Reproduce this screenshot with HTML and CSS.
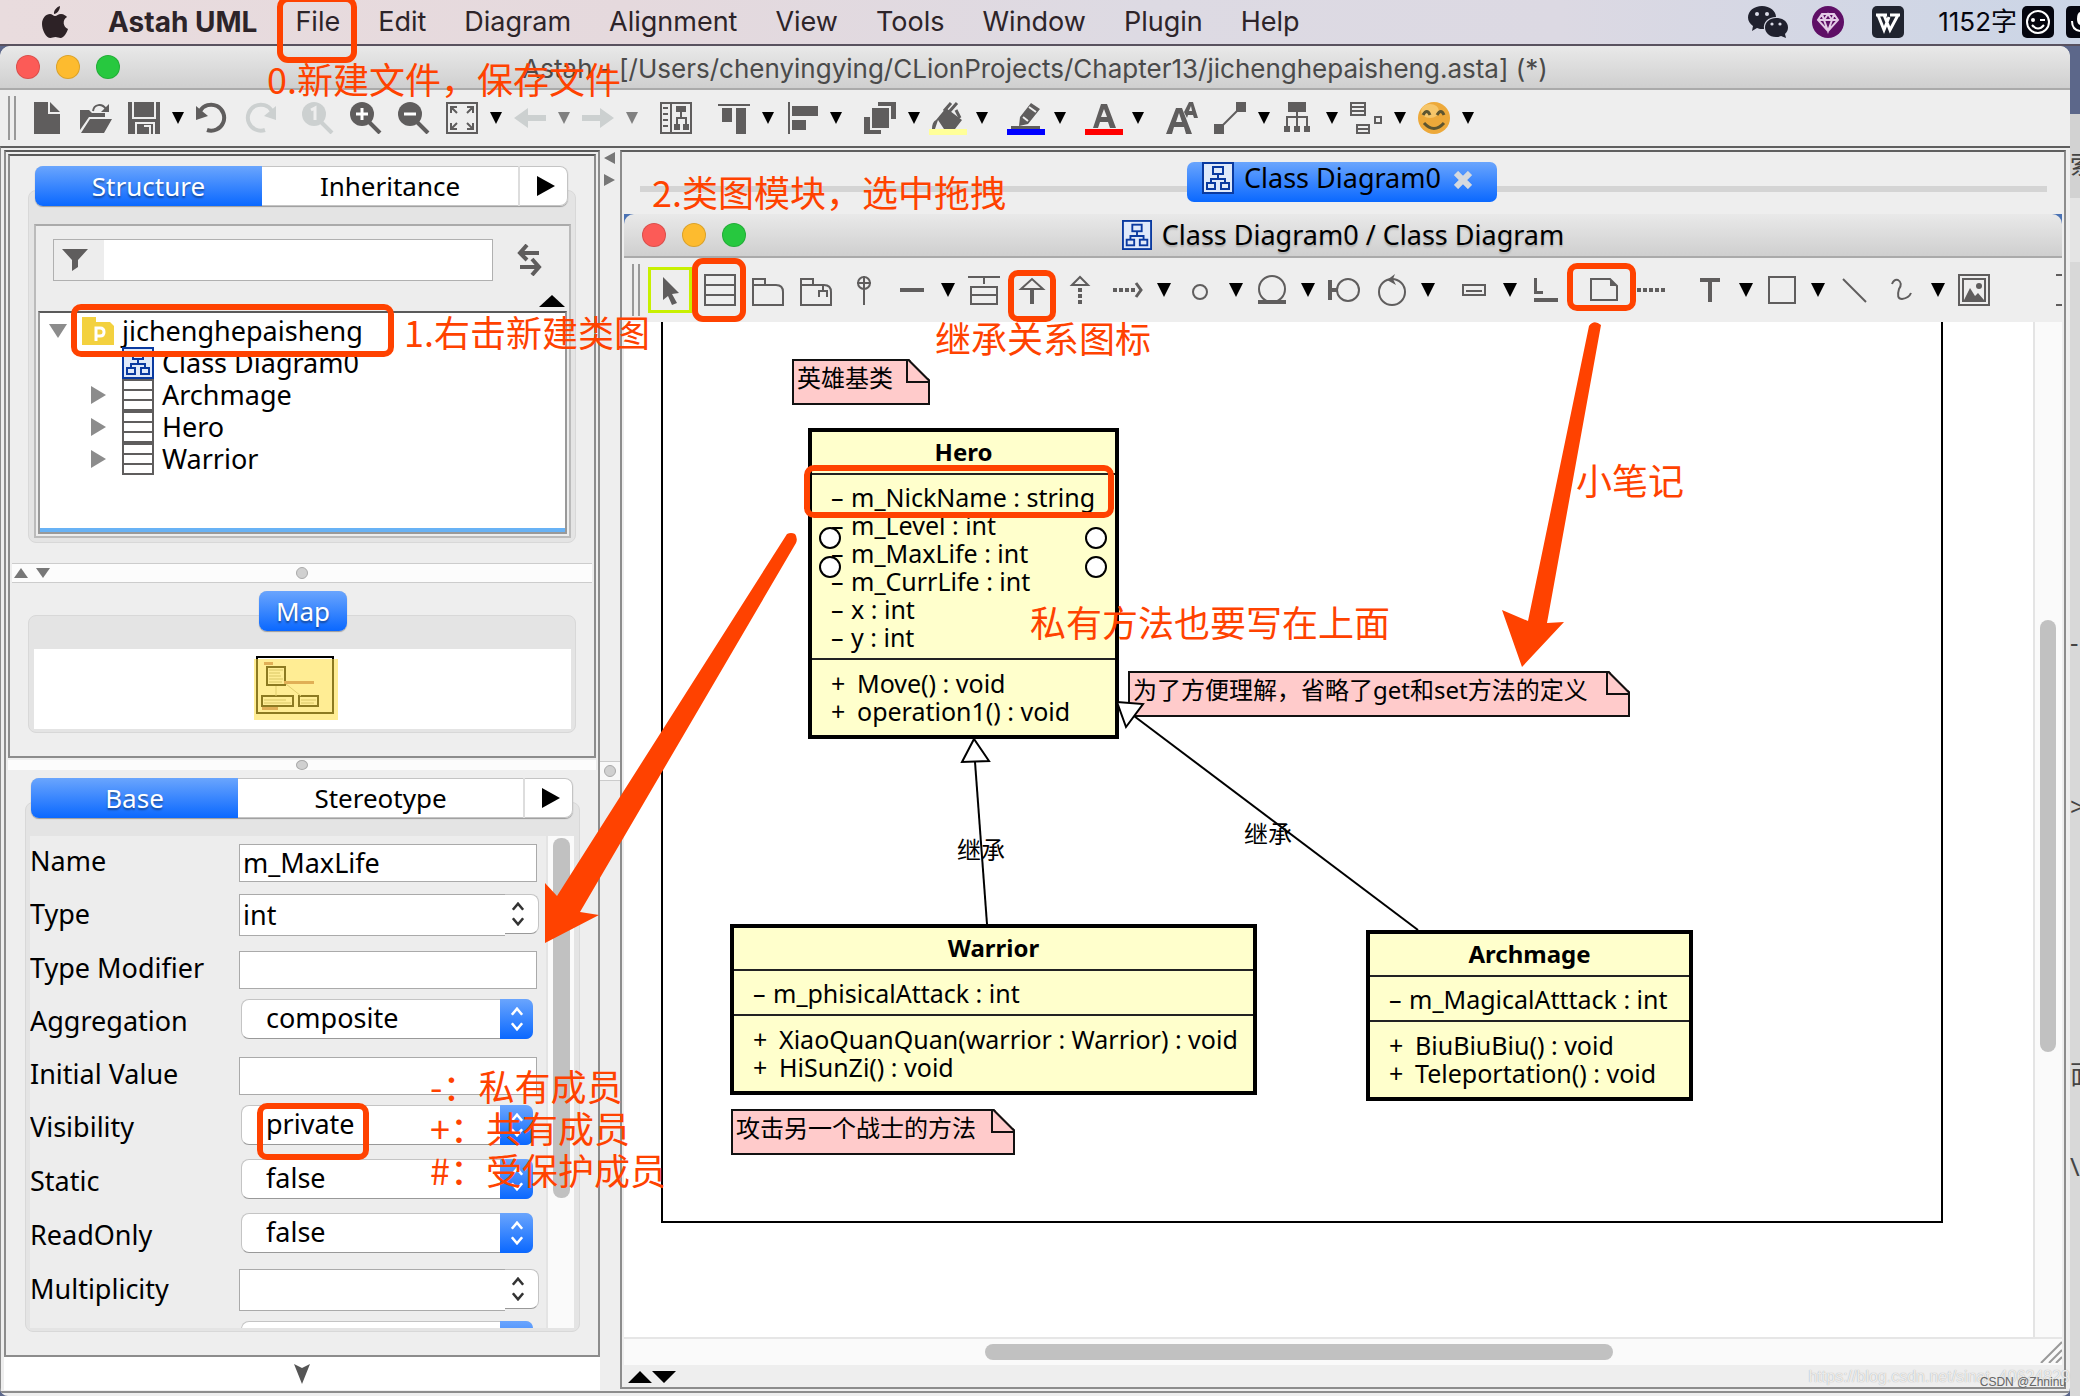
FILE: index.html
```html
<!DOCTYPE html>
<html lang="zh-CN">
<head>
<meta charset="utf-8">
<title>Astah - jichenghepaisheng.asta</title>
<link rel="stylesheet" href="styles.css">
</head>
<body>
<svg class="defs" width="0" height="0" aria-hidden="true">
  <symbol id="drop" viewBox="0 0 12 12"><path d="M0 0H12L6 12Z"/></symbol>
  <symbol id="diagram" viewBox="0 0 32 32">
    <rect x="1" y="1" width="30" height="30" fill="#e0eafa" stroke="#0a3aa0" stroke-width="2"/>
    <g fill="none" stroke="#0a3aa0" stroke-width="2"><rect x="11" y="5" width="10" height="7"/><path d="M16 12v5M9 21v-4h14v4"/><rect x="5" y="21" width="8" height="6"/><rect x="19" y="21" width="8" height="6"/></g>
  </symbol>
  <symbol id="class" viewBox="0 0 32 32"><path d="M1 1H31V31H1ZM1 11H31M1 21H31" fill="#fff" stroke="#5f5d5d" stroke-width="2"/></symbol>
  <symbol id="steps" viewBox="0 0 16 28"><path d="M2 9L8 2L14 9M2 19L8 26L14 19" fill="none" stroke="currentColor" stroke-width="3"/></symbol>
  <symbol id="lens" viewBox="0 0 32 32"><circle cx="12" cy="12" r="12"/><path d="M19 20L30 31" stroke="currentColor" stroke-width="4"/></symbol>
</svg>

<div class="desktop">
  <header class="menubar">
    <nav class="menus">
      <button class="apple" aria-label="Apple menu"><svg viewBox="0 0 26 32" width="26" height="32"><path d="M18 0C18 4 15 8 12 8C11.500 4 15 1 18 0ZM13 10C15 10 16 8 19 8C22 8 24 10 25 11C20 14 21 21 26 23C25 26 22 32 18.500 32C16.500 32 15.500 31 13.500 31C11.500 31 10 32 8.500 32C4 32 0 24 0 18C0 12 4 8 8 8C10 8 11.500 10 13 10Z" fill="#2d2226"/></svg></button>
      <button class="app-name">Astah UML</button>
      <button>File</button>
      <button>Edit</button>
      <button>Diagram</button>
      <button>Alignment</button>
      <button>View</button>
      <button>Tools</button>
      <button>Window</button>
      <button>Plugin</button>
      <button>Help</button>
    </nav>
    <div class="tray">
      <svg class="wechat" viewBox="0 0 40 32" width="40" height="32"><path d="M14 0C22 0 28 5 28 11C20 11 15 16 16 23L14 23C12 23 10 22.500 9 22L4 25L5 20C2 18 0 15 0 11.500C0 5 6 0 14 0Z" fill="#20212e"/><circle cx="9" cy="8" r="2" fill="#dadbe7"/><circle cx="19" cy="8" r="2" fill="#dadbe7"/><path d="M28 12C35 12 40 16 40 21.500C40 24 39 26 37 28L38 32L33 30C32 30.500 30 31 28 31C21 31 17 26 17 21.500C17 16 22 12 28 12Z" fill="#20212e"/><circle cx="24" cy="18" r="1.600" fill="#dadbe7"/><circle cx="32" cy="18" r="1.600" fill="#dadbe7"/></svg>
      <svg viewBox="0 0 32 32" width="32" height="32"><circle cx="16" cy="16" r="16" fill="#5f0f66"/><path d="M10 8H22L26 14L16 25L6 14ZM6 14H26M10 8L12 14L16 25L20 14L22 8M12 14L16 8L20 14" fill="none" stroke="#e3cbe6" stroke-width="2"/></svg>
      <svg class="w-icon" viewBox="0 0 32 32" width="32" height="32"><rect width="32" height="32" rx="5" fill="#20242f"/><path d="M4 9H15M6 9L12 24L17 11M12 9L18 24L26 9M18 9H28" fill="none" stroke="#fff" stroke-width="3"/></svg>
      <span class="count">1152字</span>
      <svg viewBox="0 0 32 32" width="32" height="32"><rect width="32" height="32" rx="5" fill="#05060f"/><circle cx="16" cy="16" r="11" fill="none" stroke="#fff" stroke-width="2"/><circle cx="11" cy="14" r="2" fill="#fff"/><path d="M18 14H23M10 19Q16 26 22 19" fill="none" stroke="#fff" stroke-width="2"/></svg>
      <svg class="cut" viewBox="0 0 14 32" width="14" height="32"><path d="M14 0H5Q0 0 0 5V27Q0 32 5 32H14Z" fill="#05060f"/><path d="M14 25Q6 24 6 15" fill="none" stroke="#fff" stroke-width="2"/><path d="M14 6Q11 7 11 13Q11 18 14 19Z" fill="#fff"/></svg>
    </div>
  </header>

  <div class="screen">
  <main class="window">
    <div class="titlebar">
      <div class="lights"><button class="red" aria-label="Close"></button><button class="amber" aria-label="Minimise"></button><button class="green" aria-label="Zoom"></button></div>
      <h1>Astah - [/Users/chenyingying/CLionProjects/Chapter13/jichenghepaisheng.asta] (*)</h1>
    </div>

    <div class="toolbar">
      <span class="grip"></span>
      <button class="icon" aria-label="New"><svg viewBox="0 0 32 32"><path d="M2 0H16V12H28V32H2ZM18 0L28 10H18Z"/></svg></button>
      <button class="icon" aria-label="Open"><svg viewBox="0 0 32 32"><path d="M0 8H9L12 11H25V15H9L0 28ZM10 17H32L24 31H1Z"/><path d="M13 9C14 2 22 1 26 7" fill="none" stroke="currentColor" stroke-width="2"/><path d="M29 2V10H21Z"/></svg></button>
      <button class="icon" aria-label="Save"><svg viewBox="0 0 32 32"><path d="M0 0H32V32H0Z"/><path d="M5 0V16H27V0M8 32V21H26V32M16 24H22V32" fill="none" stroke="#eee" stroke-width="2"/></svg></button>
      <button class="drop" aria-label="Save options"><svg><use href="#drop"/></svg></button>
      <button class="icon" aria-label="Undo"><svg viewBox="0 0 32 32"><path d="M4 9A13 13 0 1 1 11 28" fill="none" stroke="currentColor" stroke-width="4"/><path d="M0 4V18L12 14Z"/></svg></button>
      <button class="icon off" aria-label="Redo"><svg viewBox="0 0 32 32"><path d="M28 9A13 13 0 1 0 21 28" fill="none" stroke="currentColor" stroke-width="4"/><path d="M32 4V18L20 14Z"/></svg></button>
      <span class="space"></span>
      <button class="icon off" aria-label="Actual size"><svg viewBox="0 0 32 32"><use href="#lens"/><path d="M9 8L13 6V18" fill="none" stroke="#eee" stroke-width="3"/></svg></button>
      <button class="icon" aria-label="Zoom in"><svg viewBox="0 0 32 32"><use href="#lens"/><path d="M6 12H18M12 6V18" stroke="#fff" stroke-width="3"/></svg></button>
      <button class="icon" aria-label="Zoom out"><svg viewBox="0 0 32 32"><use href="#lens"/><path d="M6 12H18" stroke="#fff" stroke-width="3"/></svg></button>
      <button class="icon" aria-label="Fit"><svg viewBox="0 0 32 32"><path d="M1 1H31V31H1ZM5 11V5H11M5 5L11 11M21 5H27V11M27 5L21 11M5 21V27H11M5 27L11 21M21 27H27V21M27 27L21 21" fill="none" stroke="currentColor" stroke-width="2"/></svg></button>
      <button class="drop" aria-label="Fit options"><svg><use href="#drop"/></svg></button>
      <button class="icon off" aria-label="Back"><svg viewBox="0 0 32 32"><path d="M0 16L14 6V13H32V19H14V26Z"/></svg></button>
      <button class="drop dim" aria-label="Back options"><svg><use href="#drop"/></svg></button>
      <button class="icon off" aria-label="Forward"><svg viewBox="0 0 32 32"><path d="M32 16L18 6V13H0V19H18V26Z"/></svg></button>
      <button class="drop dim" aria-label="Forward options"><svg><use href="#drop"/></svg></button>
      <span class="space"></span>
      <button class="icon" aria-label="Map view"><svg viewBox="0 0 32 32"><path d="M1 1H31V31H1ZM11 1V31M3 6H8M3 12H8M3 18H8M3 24H8M21 9V16M17 24V16H26V24" fill="none" stroke="currentColor" stroke-width="2"/><path d="M16 4H26V10H16ZM14 22H20V28H14ZM23 22H29V28H23Z"/></svg></button>
      <span class="space"></span>
      <button class="icon" aria-label="Align top"><svg viewBox="0 0 32 32"><path d="M0 2H32V4H0ZM4 6H14V20H4ZM18 6H28V32H18Z"/></svg></button>
      <button class="drop" aria-label="Vertical alignment"><svg><use href="#drop"/></svg></button>
      <button class="icon" aria-label="Align left"><svg viewBox="0 0 32 32"><path d="M2 0H4V32H2ZM6 4H32V14H6ZM6 18H20V28H6Z"/></svg></button>
      <button class="drop" aria-label="Horizontal alignment"><svg><use href="#drop"/></svg></button>
      <span class="space"></span>
      <button class="icon" aria-label="Depth"><svg viewBox="0 0 32 32"><path d="M14 0H32V17H27V4H14ZM8 6H25V26H8ZM0 15H6V28H17V32H0Z"/></svg></button>
      <button class="drop" aria-label="Depth options"><svg><use href="#drop"/></svg></button>
      <button class="icon" aria-label="Fill colour"><svg viewBox="0 0 32 32"><path d="M4 18L14 6L30 18L23 27H12L6 18Q4 24 3 27H0Q0 20 4 18Z"/><path d="M12 9L19 1M17 10L25 1M24 8L28 16" fill="none" stroke="currentColor" stroke-width="3"/></svg><i class="swatch yellow"></i></button>
      <button class="drop" aria-label="Fill options"><svg><use href="#drop"/></svg></button>
      <span class="space"></span>
      <button class="icon" aria-label="Line colour"><svg viewBox="0 0 32 32"><path d="M21 1L30 7L18 22L9 24L10 15ZM1 24H30V27H1Z"/><path d="M13 15L18 19M19 5L26 10" stroke="#eee" stroke-width="2"/></svg><i class="swatch blue"></i></button>
      <button class="drop" aria-label="Line options"><svg><use href="#drop"/></svg></button>
      <span class="space"></span>
      <button class="icon" aria-label="Font colour"><svg viewBox="0 0 32 32"><path d="M5 26L13 2H19L28 26H22L20 20H12L10 26ZM13 15H19L16 7Z"/></svg><i class="swatch crimson"></i></button>
      <button class="drop" aria-label="Font colour options"><svg><use href="#drop"/></svg></button>
      <span class="space"></span>
      <button class="icon" aria-label="Font size"><svg viewBox="0 0 32 32"><path fill-rule="evenodd" d="M0 32L10 6H16L26 32H20L18 25H8L6 32ZM10 20H16L13 11ZM18 10L23 0H27L32 16H28L27 13H22L21 16ZM23 9H26L25 4Z"/></svg></button>
      <button class="icon" aria-label="Line style"><svg viewBox="0 0 32 32"><path d="M22 0H32V10H22ZM0 22H10V32H0Z"/><path d="M8 24L24 8" stroke="currentColor" stroke-width="2"/></svg></button>
      <button class="drop" aria-label="Line style options"><svg><use href="#drop"/></svg></button>
      <button class="icon" aria-label="Tree layout"><svg viewBox="0 0 32 32"><path d="M6 0H24V10H6ZM2 24H8V30H2ZM12 24H18V30H12ZM22 24H28V30H22Z"/><path d="M15 10V24M5 24V15H25V24" fill="none" stroke="currentColor" stroke-width="2"/></svg></button>
      <button class="drop" aria-label="Tree layout options"><svg><use href="#drop"/></svg></button>
      <button class="icon" aria-label="Auto layout"><svg viewBox="0 0 32 32"><path d="M1 1H15V13H1ZM1 5H15M1 9H15M7 23H19V31H7ZM7 27H19M25 15H31V21H25Z" fill="none" stroke="currentColor" stroke-width="2"/></svg></button>
      <button class="drop" aria-label="Auto layout options"><svg><use href="#drop"/></svg></button>
      <button class="icon" aria-label="Emoji"><svg viewBox="0 0 32 32"><circle cx="16" cy="16" r="16" fill="#eda93a"/><ellipse cx="12" cy="9" rx="9" ry="7" fill="#f6c66a"/><path d="M5 13Q9 6 12 13M19 13Q23 6 26 13M6 21Q16 32 26 21" fill="none" stroke="#5d5530" stroke-width="3"/></svg></button>
      <button class="drop" aria-label="Emoji options"><svg><use href="#drop"/></svg></button>
    </div>

    <div class="workspace">
      <aside class="side">
        <div class="pane">
          <section class="explorer">
            <div class="tabs"><button class="on grow-a">Structure</button><button class="grow-b">Inheritance</button><button class="more" aria-label="More tabs"><svg viewBox="0 0 18 20" width="18" height="20"><path d="M0 0L18 10L0 20Z"/></svg></button></div>
            <div class="group">
              <div class="tree-box">
                <div class="filter">
                  <label class="filter-field"><svg viewBox="0 0 26 22" width="26" height="22"><path d="M0 0H26L16 11V18L10 22V11Z"/></svg><input type="text" aria-label="Filter"></label>
                  <button class="swap" aria-label="Swap"><svg viewBox="0 0 26 32" width="26" height="32"><path d="M10 1L3 9L10 16M2 9H22M15 15L22 23L15 31M3 23H23" fill="none" stroke="#5f5d5d" stroke-width="4"/></svg></button>
                </div>
                <button class="collapse" aria-label="Collapse"><svg viewBox="0 0 26 12" width="26" height="12"><path d="M0 12L13 0L26 12Z"/></svg></button>
                <ul class="tree">
                  <li class="root"><svg class="tw" viewBox="0 0 18 14" width="18" height="14"><path d="M0 0H18L9 14Z"/></svg><svg viewBox="0 0 32 28" width="32" height="28"><path d="M0 0H14V5H28L32 9V28H0Z" fill="#f3d13f"/><path d="M14 24V11H18Q22 11 22 15Q22 19 18 19H14" fill="none" stroke="#fff" stroke-width="3"/></svg><span>jichenghepaisheng</span></li>
                  <li><i class="tw"></i><svg width="32" height="32"><use href="#diagram"/></svg><span>Class Diagram0</span></li>
                  <li><svg class="tw" viewBox="0 0 15 18" width="15" height="18"><path d="M0 0L15 9L0 18Z"/></svg><svg width="32" height="32"><use href="#class"/></svg><span>Archmage</span></li>
                  <li><svg class="tw" viewBox="0 0 15 18" width="15" height="18"><path d="M0 0L15 9L0 18Z"/></svg><svg width="32" height="32"><use href="#class"/></svg><span>Hero</span></li>
                  <li><svg class="tw" viewBox="0 0 15 18" width="15" height="18"><path d="M0 0L15 9L0 18Z"/></svg><svg width="32" height="32"><use href="#class"/></svg><span>Warrior</span></li>
                </ul>
              </div>
            </div>
            <div class="split"><span class="ends"><svg viewBox="0 0 14 10" width="14" height="10"><path d="M0 10L7 0L14 10Z"/></svg><svg viewBox="0 0 14 10" width="14" height="10"><path d="M0 0H14L7 10Z"/></svg></span><i class="knob"></i></div>
            <div class="tabs single"><button class="on">Map</button></div>
            <div class="group map-group">
              <div class="map"><svg viewBox="0 0 84 64" width="84" height="64"><path d="M3 1H79V57H3Z" fill="#fff" stroke="#000" stroke-width="2"/><g fill="none" stroke="#000" stroke-width="2"><path d="M13 11H31V29H13Z"/><path d="M8 40H39V50H8ZM45 40H64V50H45Z" /></g><path d="M10 6H19V9H10ZM30 25H60V28H30ZM8 51H24V54H8Z" fill="#b77"/><path d="M15 14H29M15 17H26M15 20H27M15 23H29M15 26H28M10 44H32M10 47H37M47 44H62M47 47H60" stroke="#aa9" stroke-width="1"/><path d="M22 30V40M32 28L47 40" stroke="#bba"/><rect x="0" y="3" width="84" height="61" fill="#ffdf3c" fill-opacity=".55"/></svg></div>
            </div>
          </section>
          <div class="split slim"><i class="knob"></i></div>
          <section class="properties">
            <div class="tabs"><button class="on grow-c">Base</button><button class="grow-d">Stereotype</button><button class="more" aria-label="More tabs"><svg viewBox="0 0 18 20" width="18" height="20"><path d="M0 0L18 10L0 20Z"/></svg></button></div>
            <div class="group props-group">
              <form class="form">
                <div class="row"><label for="name">Name</label><input id="name" class="field" type="text" value="m_MaxLife"></div>
                <div class="row tall"><label for="type">Type</label><div class="combo"><input id="type" type="text" value="int"><button type="button" aria-label="Choose type"><svg><use href="#steps"/></svg></button></div></div>
                <div class="row"><label for="mod">Type Modifier</label><input id="mod" class="field" type="text"></div>
                <div class="row"><label for="agg">Aggregation</label><div class="pick"><select id="agg"><option>composite</option></select><span><svg><use href="#steps"/></svg></span></div></div>
                <div class="row"><label for="init">Initial Value</label><input id="init" class="field" type="text"></div>
                <div class="row tall"><label for="vis">Visibility</label><div class="pick"><select id="vis"><option>private</option></select><span><svg><use href="#steps"/></svg></span></div></div>
                <div class="row tall"><label for="stat">Static</label><div class="pick"><select id="stat"><option>false</option></select><span><svg><use href="#steps"/></svg></span></div></div>
                <div class="row tall"><label for="ro">ReadOnly</label><div class="pick"><select id="ro"><option>false</option></select><span><svg><use href="#steps"/></svg></span></div></div>
                <div class="row tall"><label for="mult">Multiplicity</label><div class="combo"><input id="mult" type="text"><button type="button" aria-label="Choose multiplicity"><svg><use href="#steps"/></svg></button></div></div>
                <div class="row tall"><span></span><div class="pick"><select aria-label="Derived"><option>false</option></select><span><svg><use href="#steps"/></svg></span></div></div>
              </form>
              <div class="vbar"><i></i></div>
            </div>
          </section>
        </div>
        <button class="expand" aria-label="Expand"><svg viewBox="0 0 16 20" width="16" height="20"><path d="M0 0L8 4L16 0L8 20Z" fill="#555"/></svg></button>
      </aside>

      <div class="divider">
        <svg viewBox="0 0 12 36" width="12" height="36"><path d="M11 0V12L0 6ZM0 22V34L11 28Z" fill="#777"/></svg>
        <span><i class="knob"></i></span>
      </div>

      <section class="editor">
        <div class="tabstrip"><button class="doc-tab"><svg width="32" height="32"><use href="#diagram"/></svg><span>Class Diagram0</span><svg class="x" viewBox="0 0 18 18" width="18" height="18"><path d="M2 2L16 16M16 2L2 16" stroke="#d5d9de" stroke-width="6"/></svg></button></div>
        <div class="frame">
          <div class="titlebar inner">
            <div class="lights"><button class="red" aria-label="Close"></button><button class="amber" aria-label="Minimise"></button><button class="green" aria-label="Zoom"></button></div>
            <h2><svg width="30" height="30"><use href="#diagram"/></svg>Class Diagram0 / Class Diagram</h2>
          </div>
          <div class="palette">
            <span class="grip"></span>
            <button class="icon picked" aria-label="Select"><svg viewBox="0 0 32 32"><path d="M9 3L25 19L18 20L23 29L18 31L14 22L9 26Z"/></svg></button>
            <button class="icon" aria-label="Class"><svg viewBox="0 0 32 32"><path d="M1 1H31V31H1ZM1 11H31M1 21H31" fill="none" stroke="currentColor" stroke-width="2"/></svg></button>
            <button class="icon" aria-label="Package"><svg viewBox="0 0 32 32"><path d="M1 31V5H13V11H24Q31 11 31 18V31ZM1 11H13" fill="none" stroke="currentColor" stroke-width="2"/></svg></button>
            <button class="icon" aria-label="Subsystem"><svg viewBox="0 0 32 32"><path d="M1 31V5H13V11H24Q31 11 31 18V31ZM1 11H13M19 23V17H27V23M23 17V12" fill="none" stroke="currentColor" stroke-width="2"/></svg></button>
            <button class="icon" aria-label="Containment"><svg viewBox="0 0 32 32"><path d="M16 2V31M9 9H23" stroke="currentColor" stroke-width="2"/><circle cx="16" cy="9" r="6" fill="none" stroke="currentColor" stroke-width="2"/></svg></button>
            <button class="icon" aria-label="Association"><svg viewBox="0 0 32 32"><path d="M4 14H28V18H4Z"/></svg></button>
            <button class="drop" aria-label="Association options"><svg><use href="#drop"/></svg></button>
            <button class="icon" aria-label="Association class"><svg viewBox="0 0 32 32"><path d="M0 3H32M16 3V10M3 13H29V30H3ZM3 21H29" fill="none" stroke="currentColor" stroke-width="2"/></svg></button>
            <button class="icon" aria-label="Generalization"><svg viewBox="0 0 32 32"><path d="M5 15L16 5L27 15Z" fill="none" stroke="currentColor" stroke-width="2"/><path d="M14 15H18V30H14Z"/></svg></button>
            <button class="icon" aria-label="Realization"><svg viewBox="0 0 32 32"><path d="M8 11L16 3L24 11Z" fill="none" stroke="currentColor" stroke-width="2"/><path d="M16 14V31" stroke="currentColor" stroke-width="4" stroke-dasharray="4 2"/></svg></button>
            <button class="icon" aria-label="Dependency"><svg viewBox="0 0 32 32"><path d="M1 16H25" stroke="currentColor" stroke-width="4" stroke-dasharray="4 2"/><path d="M24 9L29 16L24 23" fill="none" stroke="currentColor" stroke-width="3"/></svg></button>
            <button class="drop" aria-label="Dependency options"><svg><use href="#drop"/></svg></button>
            <button class="icon" aria-label="Interface"><svg viewBox="0 0 32 32"><circle cx="16" cy="18" r="7" fill="none" stroke="currentColor" stroke-width="2"/></svg></button>
            <button class="drop" aria-label="Interface options"><svg><use href="#drop"/></svg></button>
            <button class="icon" aria-label="Entity"><svg viewBox="0 0 32 32"><circle cx="16" cy="15" r="13" fill="none" stroke="currentColor" stroke-width="2"/><path d="M2 28H30" stroke="currentColor" stroke-width="4"/></svg></button>
            <button class="drop" aria-label="Entity options"><svg><use href="#drop"/></svg></button>
            <button class="icon" aria-label="Boundary"><svg viewBox="0 0 32 32"><circle cx="20" cy="16" r="11" fill="none" stroke="currentColor" stroke-width="2"/><path d="M0 6H4V14H9V18H4V26H0Z"/></svg></button>
            <button class="icon" aria-label="Control"><svg viewBox="0 0 32 32"><circle cx="16" cy="18" r="13" fill="none" stroke="currentColor" stroke-width="2"/><path d="M11 6L19 0L17 5L20 11Z"/></svg></button>
            <button class="drop" aria-label="Control options"><svg><use href="#drop"/></svg></button>
            <span class="space"></span>
            <button class="icon" aria-label="Instance"><svg viewBox="0 0 32 32"><path d="M5 11H27V21H5ZM8 17H24" fill="none" stroke="currentColor" stroke-width="2"/></svg></button>
            <button class="drop" aria-label="Instance options"><svg><use href="#drop"/></svg></button>
            <button class="icon" aria-label="Link"><svg viewBox="0 0 32 32"><path d="M4 4H7V17H13V20H4ZM4 24H28V28H4Z"/></svg></button>
            <span class="space"></span>
            <button class="icon" aria-label="Note"><svg viewBox="0 0 32 32"><path d="M3 5H22L29 12V26H3Z" fill="none" stroke="currentColor" stroke-width="2"/><path d="M22 5V12H29Z"/></svg></button>
            <button class="icon" aria-label="Note anchor"><svg viewBox="0 0 32 32"><path d="M1 16H31" stroke="currentColor" stroke-width="4" stroke-dasharray="4 2"/></svg></button>
            <span class="space"></span>
            <button class="icon" aria-label="Text"><svg viewBox="0 0 32 32"><path d="M6 4H26V8H18V28H14V8H6Z"/></svg></button>
            <button class="drop" aria-label="Text options"><svg><use href="#drop"/></svg></button>
            <button class="icon" aria-label="Rectangle"><svg viewBox="0 0 32 32"><rect x="3" y="3" width="26" height="26" fill="none" stroke="currentColor" stroke-width="2"/></svg></button>
            <button class="drop" aria-label="Shape options"><svg><use href="#drop"/></svg></button>
            <button class="icon" aria-label="Line"><svg viewBox="0 0 32 32"><path d="M5 5L28 28" stroke="currentColor" stroke-width="2"/></svg></button>
            <button class="icon" aria-label="Freehand"><svg viewBox="0 0 32 32"><path d="M6 10Q8 5 12 6Q17 9 13 15Q10 25 16 25Q23 24 25 19" fill="none" stroke="currentColor" stroke-width="2"/></svg></button>
            <button class="drop" aria-label="Freehand options"><svg><use href="#drop"/></svg></button>
            <button class="icon" aria-label="Image"><svg viewBox="0 0 32 32"><path d="M1 1H31V31H1ZM5 5H27V27H5Z" fill="none" stroke="currentColor" stroke-width="2"/><circle cx="21" cy="12" r="3"/><path d="M6 26L12 14L17 22L20 19L26 26Z"/></svg></button>
            <i class="edge"></i>
          </div>
          <div class="view">
            <div class="canvas">
              <div class="sheet"></div>
              <div class="note n1">英雄基类</div>
              <div class="note n2">为了方便理解，省略了get和set方法的定义</div>
              <div class="note n3">攻击另一个战士的方法</div>
              <article class="uml hero">
                <h3>Hero</h3>
                <ul><li><b>–</b>m_NickName : string</li><li><b>–</b>m_Level : int</li><li><b>–</b>m_MaxLife : int</li><li><b>–</b>m_CurrLife : int</li><li><b>–</b>x : int</li><li><b>–</b>y : int</li></ul>
                <ul class="ops"><li><b>+</b>Move() : void</li><li><b>+</b>operation1() : void</li></ul>
              </article>
              <article class="uml warrior">
                <h3>Warrior</h3>
                <ul><li><b>–</b>m_phisicalAttack : int</li></ul>
                <ul class="ops"><li><b>+</b>XiaoQuanQuan(warrior : Warrior) : void</li><li><b>+</b>HiSunZi() : void</li></ul>
              </article>
              <article class="uml archmage">
                <h3>Archmage</h3>
                <ul><li><b>–</b>m_MagicalAtttack : int</li></ul>
                <ul class="ops"><li><b>+</b>BiuBiuBiu() : void</li><li><b>+</b>Teleportation() : void</li></ul>
              </article>
              <svg class="links" width="1400" height="1000"><g fill="#fff" stroke="#000" stroke-width="2"><path d="M351 440L363 602" /><path d="M350 417L338 440L365 439Z"/><path d="M510 394L794 608"/><path d="M493 380L519 382L502 405Z"/><circle cx="206" cy="216" r="10"/><circle cx="206" cy="245" r="10"/><circle cx="472" cy="216" r="10"/><circle cx="472" cy="245" r="10"/></g></svg>
              <span class="rel r1">继承</span>
              <span class="rel r2">继承</span>
            </div>
            <div class="vbar big"><i></i></div>
            <div class="hbar"><i></i><svg viewBox="0 0 22 22" width="22" height="22"><path d="M1 22L22 1M9 22L22 9M16 22L22 16" stroke="#999" stroke-width="2"/></svg></div>
          </div>
        </div>
        <div class="status"><svg viewBox="0 0 48 12" width="48" height="12"><path d="M0 12L12 0L24 12ZM24 0H48L36 12Z"/></svg></div>
      </section>
    </div>
  </main>
  <aside class="behind"><span class="b1">索</span><span class="b2">-</span><span class="b3">&gt;</span><span class="b4">面</span><span class="b5">\</span></aside>
  </div>

  <div class="marks">
    <svg width="2080" height="1396" aria-hidden="true">
      <g fill="none" stroke="#ff4200" stroke-width="6"><rect x="280" y="-1" width="74" height="61" rx="8"/><rect x="74" y="307" width="317" height="47" rx="7"/><rect x="695" y="261" width="48" height="58" rx="8"/><rect x="1011" y="273" width="42" height="46" rx="7"/><rect x="1570" y="266" width="63" height="42" rx="7"/><rect x="807" y="468" width="304" height="47" rx="7"/><rect x="260" y="1106" width="106" height="51" rx="7"/></g>
      <path d="M787 534Q791 532 795 534Q798 538 796 543L580 912L599 915L545 943V883L557 896Z" fill="#ff4200"/>
      <path d="M1589 326Q1594 319 1601 325L1547 623L1564 622L1522 667L1502 610L1528 621Z" fill="#ff4200"/>
    </svg>
    <p class="m0">0.新建文件，保存文件</p>
    <p class="m1">1.右击新建类图</p>
    <p class="m2">2.类图模块，选中拖拽</p>
    <p class="m3">继承关系图标</p>
    <p class="m4">小笔记</p>
    <p class="m5">私有方法也要写在上面</p>
    <p class="m6">-：私有成员<br>+：共有成员<br>#：受保护成员</p>
    <small class="url">https://blog.csdn.net/sinat_40624829</small>
    <small class="credit">CSDN @Zhninu</small>
  </div>
</div>
</body>
</html>
```
FILE: styles.css
```css
* { box-sizing: border-box; }
html, body { margin: 0; height: 100%; }
body {
  font-family: "Noto Sans", "Noto Sans CJK SC", sans-serif;
  font-size: 27px;
  line-height: 32px;
  color: #000;
  overflow: hidden;
}
button, input, select { font: inherit; color: inherit; border: 0; padding: 0; margin: 0; background: none; border-radius: 0; outline: 0; }
ul, h1, h2, h3, p { margin: 0; padding: 0; list-style: none; font-weight: 400; font-size: inherit; }
svg { display: block; flex: none; }
.defs { position: absolute; }

.desktop { position: relative; height: 100vh; display: flex; flex-direction: column; background: #2a2127; overflow: hidden; }

/* system menu bar */
.menubar {
  height: 46px; flex: none;
  display: flex; justify-content: space-between; align-items: center;
  padding-left: 42px;
  border-bottom: 2px solid #59525f;
  background: linear-gradient(90deg, #e9dcde 0%, #e5d9dd 30%, #dddae3 55%, #dcd9e3 75%, #cbd5e6 100%);
  font-family: Inter, "Noto Sans CJK SC", sans-serif;
  color: #2d2429;
}
.menus { display: flex; align-items: center; gap: 38px; }
.menus .apple { height: 36px; margin-right: 2px; }
.menus .app-name { font-weight: 700; font-size: 28px; }
.tray { display: flex; align-items: center; gap: 28px; color: #05060f; font-size: 26px; }
.tray .wechat { margin-right: -4px; }
.tray .count { margin-left: 6px; margin-right: -23px; }
.tray .cut { margin-left: -16px; }

.screen { flex: 1; min-height: 0; display: flex; background: #5c678a; }
.window { flex: 1; min-width: 0; display: flex; flex-direction: column; background: #eee; border-radius: 10px 10px 8px 8px; overflow: hidden; }

.titlebar {
  height: 44px; flex: none; display: grid; grid-template-columns: 1fr auto 1fr; align-items: center;
  padding-left: 16px;
  background: linear-gradient(#e9e9e9, #cfcfcf);
  border-bottom: 2px solid #aaa; border-radius: 10px 10px 0 0;
}
.titlebar h1 { font-family: Inter, sans-serif; font-size: 26px; color: #4a4a4a; padding: 4px 16px 0 0; }
.lights { display: flex; gap: 16px; }
.lights button { width: 24px; height: 24px; border-radius: 50%; border: 1px solid #0002; }
.red { background: #fc5b57; }
.amber { background: #fdbb2f; }
.green { background: #27c83f; }

/* both tool bars */
.toolbar, .palette { display: flex; align-items: center; flex: none; color: #5f5d5d; }
.toolbar { height: 56px; padding-left: 8px; }
.grip { width: 8px; height: 44px; border: solid #999; border-width: 0 2px; margin-right: 8px; }
.icon { position: relative; width: 48px; height: 48px; display: grid; place-items: center; flex: none; }
.icon svg { width: 32px; height: 32px; fill: currentColor; }
.icon.off { color: #ccd0d0; }
.drop { width: 20px; height: 32px; display: grid; place-items: center; flex: none; color: #000; }
.drop svg { width: 12px; height: 12px; fill: currentColor; }
.drop.dim { color: #808080; }
.space { width: 10px; flex: none; }
.swatch { position: absolute; left: 5px; right: 5px; bottom: 7px; height: 6px; }
.yellow { background: #ffff99; }
.blue { background: #00f; }
.crimson { background: #f00; }

.workspace { flex: 1; min-height: 0; display: flex; margin-bottom: 3px; padding: 2px 4px 0 3px; border: solid #8c8c8c; border-width: 2px 0 2px 1px; border-top-color: #5f5f5f; }
.side { width: 596px; flex: none; display: flex; flex-direction: column; }
.pane { flex: 1; min-height: 0; display: flex; flex-direction: column; border: 2px solid #8c8c8c; border-top-color: #5a5a5a; padding: 2px 2px 0; }
.explorer { border: 2px solid #8c8c8c; border-top-color: #5a5a5a; padding-top: 10px; height: 604px; flex: none; }

.tabs { position: relative; display: flex; height: 40px; margin: 0 26px 0 25px; border-radius: 8px; background: #fff; box-shadow: inset 0 0 0 1px #c4c4c4, 0 1px 1px #999; overflow: hidden; z-index: 1; font-size: 26px; }
.tabs button { display: grid; place-items: center; }
.tabs .on { background: linear-gradient(#6aa5fd, #0a68ff); color: #fff; text-shadow: 0 2px 2px #0006; }
.tabs .grow-a { flex: 227; }
.tabs .grow-b { flex: 256; }
.tabs .grow-c { flex: 207; }
.tabs .grow-d { flex: 285; }
.tabs .more { width: 50px; border-left: 2px solid #ddd; padding-left: 4px; }
.tabs.single { width: 88px; margin: 8px auto 0 249px; }
.tabs.single .on { flex: 1; }
.group { margin: -16px 18px 0; border: 1px solid #d8d8d8; border-radius: 8px; background: #e4e4e4; padding: 33px 4px 4px 5px; }

.tree-box { border: 2px solid #bbb; border-top-color: #aaa; background: #ededed; padding: 13px 2px 2px; }
.filter { display: flex; align-items: center; height: 42px; padding-left: 15px; }
.filter-field { width: 440px; height: 42px; display: flex; align-items: center; border: 1px solid #b0b0b0; }
.filter-field svg { margin: 0 16px 0 8px; fill: #5f5d5d; }
.filter-field input { flex: 1; min-width: 0; height: 40px; background: #fff; }
.swap { margin-left: 24px; }
.collapse { display: block; margin: 14px 2px 4px auto; }
.tree { height: 223px; background: #fff; border: 2px solid #999; border-top-color: #5a5a5a; padding: 2px 0 0; box-shadow: inset 0 -4px #68b2f5; }
.tree li { display: flex; align-items: center; height: 32px; padding-left: 51px; }
.tree li .tw { width: 15px; margin-right: 16px; fill: #8c8c8c; }
.tree li span { padding-left: 8px; }
.tree li.root { padding-left: 9px; }
.tree li.root .tw { width: 18px; margin-right: 15px; }

.split { position: relative; height: 20px; margin: 20px 2px 0; background: #fcfcfc; border: solid #ccc; border-width: 1px 0; display: grid; place-items: center; }
.split .ends { position: absolute; left: 2px; top: 4px; display: flex; gap: 8px; fill: #777; }
.split.slim { height: 10px; margin: 2px 0 0; border: 0; flex: none; }
.knob { display: block; width: 12px; height: 12px; border-radius: 50%; background: #d0d0d0; border: 1px solid #aaa; }
.split.slim .knob { height: 10px; }
.map { height: 80px; background: #fff; padding: 7px 0 0 220px; }
.map-group { padding-bottom: 3px; }

.properties { flex: 1; min-height: 0; display: flex; flex-direction: column; padding: 8px 0 23px; }
.properties .tabs { margin: 0 23px; flex: none; }
.props-group { flex: 1; min-height: 0; display: flex; margin: -16px 16px 0 17px; padding: 33px 5px 3px 4px; }
.form { flex: 1; min-width: 0; overflow: hidden; background: #ededed; }
.row { display: grid; grid-template-columns: 209px 298px; align-items: center; height: 53px; }
.row.tall { height: 54px; }
.row label { padding-bottom: 4px; }
.field { height: 38px; background: #fff; border: 1px solid #aaa; padding: 0 3px; width: 298px; }
.combo { display: flex; width: 300px; height: 42px; margin-bottom: 2px; }
.combo input { width: 266px; background: #fff; border: 1px solid #aaa; border-right: 0; padding: 0 3px; }
.combo button { width: 34px; height: 40px; padding-right: 8px; display: grid; place-items: center; background: #fff; border: 1px solid #c4c4c4; border-left: 0; border-bottom-color: #999; border-radius: 0 8px 8px 0; color: #333; }
.combo svg, .pick svg { width: 14px; height: 24px; }
.pick { position: relative; width: 292px; height: 40px; margin: 0 0 8px 2px; }
.pick select { appearance: none; width: 100%; height: 40px; padding: 0 0 2px 24px; background: #fff; border: 1px solid #c4c4c4; border-bottom-color: #999; border-radius: 8px; }
.pick span { position: absolute; right: 0; top: 0; width: 33px; height: 40px; display: grid; place-items: center; border-radius: 0 7px 7px 0; background: linear-gradient(#6aa5fd, #0a68ff); color: #fff; pointer-events: none; }
.vbar { width: 28px; background: #fafafa; border-left: 2px solid #e4e4e4; padding: 2px 4px; }
.vbar i { display: block; height: 360px; width: 17px; margin-left: 1px; border-radius: 8px; background: #c1c1c1; }
.expand { height: 33px; margin-bottom: 1px; background: #fff; display: grid; place-items: center; flex: none; }

.divider { width: 20px; flex: none; display: flex; flex-direction: column; align-items: center; padding-top: 2px; }
.divider span { margin-top: 573px; width: 20px; height: 20px; background: #f8f8f8; border: solid #ccc; border-width: 1px 0; display: grid; place-items: center; }

/* diagram editor */
.editor { flex: 1; min-width: 0; margin-bottom: 2px; display: flex; flex-direction: column; border: 2px solid #8c8c8c; border-top-color: #5f5f5f; }
.tabstrip { height: 62px; flex: none; padding: 10px 17px 12px 18px; display: flex; justify-content: center; background: linear-gradient(#d4d4d4, #d4d4d4) 18px 34px / calc(100% - 35px) 6px no-repeat; }
.doc-tab { width: 310px; height: 40px; display: flex; align-items: flex-start; padding-left: 15px; border-radius: 7px; background: linear-gradient(#6aa5fd, #0a68ff); white-space: nowrap; margin-right: 3px; }
.doc-tab span { margin: 0 10px; width: 200px; text-align: left; }
.doc-tab .x { margin-top: 9px; }
.frame { flex: 1; min-height: 0; margin: 0 2px; display: flex; flex-direction: column; background: #4a72b4; }
.titlebar.inner { padding-left: 18px; }
.inner h2 { display: flex; align-items: center; gap: 10px; padding-right: 18px; text-shadow: 0 2px 2px #0003; }
.palette { height: 64px; padding-left: 8px; background: #eee; }
.palette .grip { height: 52px; }
.palette .drop { width: 24px; }
.palette .drop svg { width: 14px; height: 14px; }
.palette .picked { width: 44px; height: 46px; margin-right: 4px; border: 3px solid #c8f000; }
.palette .edge { width: 6px; height: 32px; margin-left: auto; border: solid #5f5d5d; border-width: 2px 0; }
.view { flex: 1; min-height: 0; display: grid; grid-template-columns: 1fr 29px; grid-template-rows: 1fr 28px; background: #fafafa; }
.canvas { position: relative; overflow: hidden; background: #fff; }
.vbar.big { width: auto; padding: 298px 5px 0; }
.vbar.big i { width: 16px; height: 432px; margin-left: 0; }
.hbar { grid-column: 1 / 3; border-top: 2px solid #e6e6e6; display: flex; align-items: center; justify-content: space-between; }
.hbar i { width: 628px; height: 16px; margin-left: 361px; border-radius: 8px; background: #c1c1c1; }
.status { height: 22px; flex: none; padding: 6px 0 0 6px; }

.canvas > * { position: absolute; }
.sheet { left: 37px; top: -2px; width: 1282px; height: 903px; border: 2px solid #000; }
.note { height: 46px; font-size: 24px; line-height: 34px; padding-left: 3px; white-space: nowrap; background: #ffcbcb; border: 2px solid #111; clip-path: polygon(0 0, calc(100% - 21px) 0, 100% 21px, 100% 100%, 0 100%); }
.note::after { content: ""; position: absolute; right: -2px; top: -2px; width: 22px; height: 22px; border: solid #111; border-width: 0 0 2px 2px; background: linear-gradient(45deg, transparent 45%, #111 46%, #111 54%, transparent 55%); }
.n1 { left: 168px; top: 37px; width: 138px; }
.n2 { left: 504px; top: 349px; width: 502px; }
.n3 { left: 107px; top: 787px; width: 284px; }
.uml { background: #ffffcc; border: 4px solid #000; font-size: 25px; line-height: 28px; }
.uml h3 { height: 41px; padding-top: 6px; font-weight: 700; font-size: 24px; text-align: center; }
.uml ul { border-top: 2px solid #222; padding: 8px 0 7px 19px; white-space: nowrap; }
.uml ul.ops { padding: 9px 0 10px 19px; }
.uml b { display: inline-block; width: 20px; font-weight: 400; }
.uml .ops b { width: 26px; }
.hero { left: 184px; top: 106px; width: 311px; }
.warrior { left: 106px; top: 602px; width: 527px; }
.archmage { left: 742px; top: 608px; width: 327px; }
.links { left: 0; top: 0; }
.rel { font-size: 24px; }
.r1 { left: 333px; top: 512px; }
.r2 { left: 620px; top: 496px; }

/* window showing behind on the right */
.behind { position: relative; width: 10px; flex: none; overflow: hidden; background: linear-gradient(#5c678a 68px, #d2d2d2 68px, #d2d2d2 152px, #e4e4e4 152px, #e4e4e4 216px, #d8d8d8 216px); color: #444; font-size: 26px; }
.behind span { position: absolute; left: 0; }
.b1 { top: 102px; }
.b2 { top: 580px; }
.b3 { top: 744px; }
.b4 { top: 1012px; }
.b5 { top: 1104px; }

/* hand-made annotations over the whole screen */
.marks { position: absolute; inset: 0; overflow: hidden; pointer-events: none; color: #ff4200; font-family: "Noto Sans CJK SC", sans-serif; font-size: 36px; line-height: 42px; white-space: nowrap; }
.marks > * { position: absolute; }
.m0 { left: 267px; top: 57px; }
.m1 { left: 404px; top: 310px; }
.m2 { left: 652px; top: 170px; }
.m3 { left: 935px; top: 316px; }
.m4 { left: 1576px; top: 458px; }
.m5 { left: 1030px; top: 600px; }
.m6 { left: 430px; top: 1064px; }
.marks small { font-family: "Liberation Sans", sans-serif; line-height: 20px; }
.url { right: 10px; top: 1367px; font-size: 16px; color: #fffc; text-shadow: 0 0 1px #999; }
.credit { right: 14px; top: 1372px; font-size: 12px; color: #666; }
```
